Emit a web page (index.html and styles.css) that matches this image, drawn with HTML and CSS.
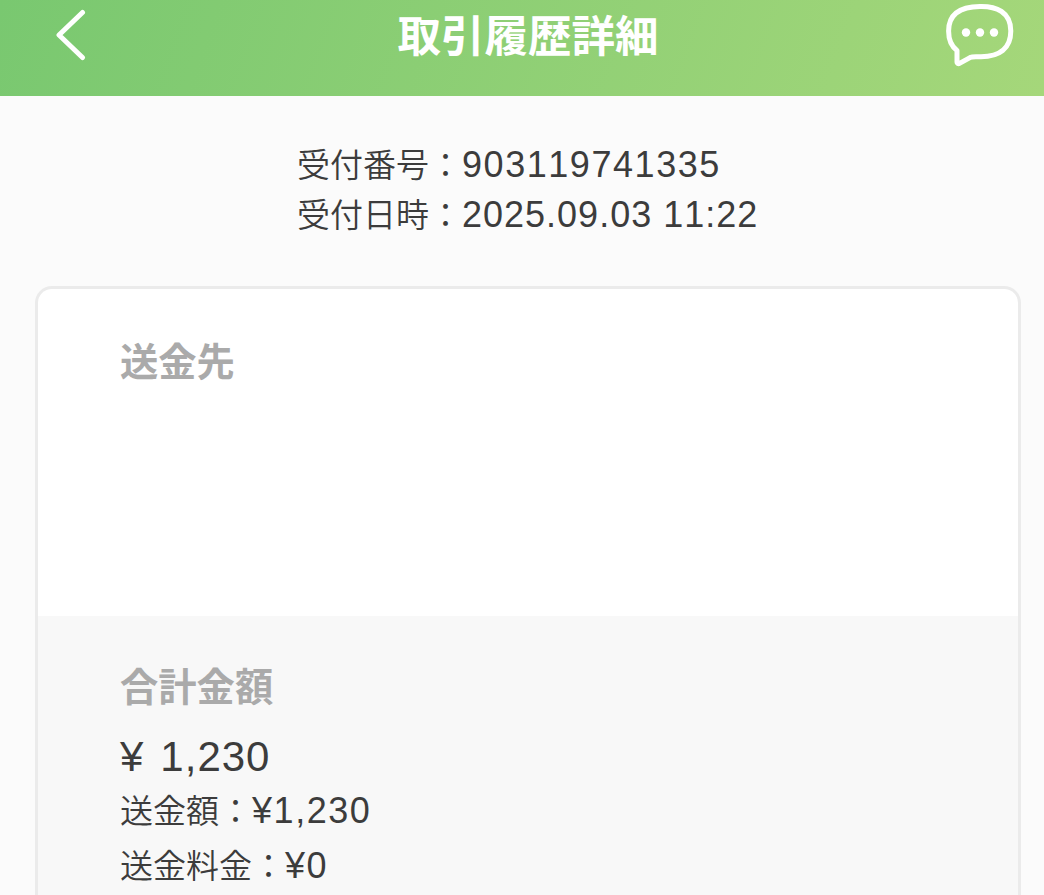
FILE: index.html
```html
<!DOCTYPE html>
<html lang="ja">
<head>
    <meta charset="UTF-8">
    <meta name="viewport" content="width=device-width, initial-scale=1.0">
    <title>取引履歴詳細</title>
    <link rel="stylesheet" href="styles.css">
</head>
<body>
<header class="header">
    <!-- 戻る -->
    <svg class="back-icon" width="32" height="54" viewBox="0 0 32 54">
        <path d="M28.5 4.5L5 27L28.5 49.5"/>
    </svg>
    <h1>取引履歴詳細</h1>
    <!-- チャット -->
    <svg class="chat-icon" width="70" height="68" viewBox="0 0 70 68">
        <path d="M35 6.4C51 6 65.8 12 65.8 31C65.8 49 54 56.6 36 56.8C32 57 28 56.2 25 57.6L14.5 63.4C13.2 64.2 12 63.6 12 62.2V50.5C6 46 3.6 39 3.6 31C3.6 13 16 6.6 35 6.4Z"/>
        <circle cx="21" cy="32.5" r="4.2"/>
        <circle cx="35" cy="32.5" r="4.2"/>
        <circle cx="49" cy="32.5" r="4.2"/>
    </svg>
</header>

<div class="reception">
    <p>受付番号：<span class="num">903119741335</span></p>
    <p>受付日時：<span class="num date">2025.09.03 11:22</span></p>
</div>

<main class="card">
    <section class="recipient">
        <h2>送金先</h2>
    </section>
    <section class="amount">
        <h2>合計金額</h2>
        <p class="total"><span class="yen">¥</span>1,230</p>
        <p class="detail">送金額：<span class="num">¥1,230</span></p>
        <p class="detail">送金料金：<span class="num">¥0</span></p>
    </section>
</main>
</body>
</html>
```
FILE: styles.css
```css
* {
    margin: 0;
    padding: 0;
    box-sizing: border-box;
}

body {
    display: flex;
    flex-direction: column;
    height: 895px;
    font-family: "Noto Sans CJK JP", sans-serif;
    font-weight: 350;
    color: #3c3c3c;
    background-color: #fbfbfb;
}

.header {
    display: flex;
    justify-content: space-between;
    height: 96px;
    padding: 0 29px 0 54px;
    background: linear-gradient(110deg, #79c870, #a5d77a);
}

.header h1 {
    padding-left: 25px;
    font-size: 43.5px;
    font-weight: 700;
    line-height: 67px;
    color: #fff;
}

.header path {
    fill: none;
    stroke: #fff;
    stroke-width: 5;
    stroke-linecap: round;
    stroke-linejoin: round;
}

.header circle {
    fill: #fff;
}

.back-icon {
    margin-top: 8px;
}

.reception {
    padding: 42px 0 0 297px;
    font-size: 33px;
    line-height: 50px;
}

.num {
    font-family: "Liberation Sans", Arial, sans-serif;
    font-size: 36px;
    font-kerning: none;
    letter-spacing: 1.55px;
    line-height: 1;
}

.num.date {
    letter-spacing: 1px;
}

.card {
    flex: 1;
    display: flex;
    flex-direction: column;
    width: 986px;
    margin: 48px 0 0 35px;
    overflow: hidden;
    background-color: #fff;
    border: 3px solid #ebebeb;
    border-bottom: none;
    border-radius: 17px 17px 0 0;
}

.card h2 {
    font-size: 38.3px;
    font-weight: 700;
    line-height: 56px;
    color: #aaa;
}

.recipient {
    height: 327px;
    padding: 43px 82px 0;
}

.amount {
    flex: 1;
    padding: 41px 82px 0;
    background-color: #f8f8f8;
}

.total {
    margin-top: 17px;
    font-family: "Liberation Sans", Arial, sans-serif;
    font-size: 42px;
    letter-spacing: 1px;
    line-height: 54px;
}

.yen {
    margin-right: 16px;
}

.detail {
    font-size: 33px;
    line-height: 55px;
}

.detail:nth-of-type(2) {
    margin-top: -2px;
}
```
